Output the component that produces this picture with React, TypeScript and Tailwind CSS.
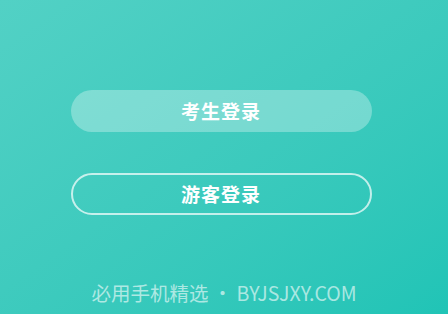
export default function App() {
  return (
    <div
      className="flex h-[314px] w-[448px] flex-col items-center bg-gradient-to-br from-[#52d1c5] to-[#20c4b6] pt-[90px]"
      style={{ fontFamily: '"Noto Sans CJK SC", "Noto Sans", sans-serif' }}
    >
      <button className="mr-[6px] flex h-[42px] w-[301px] items-center justify-center rounded-full bg-white/30 text-[19px] font-bold tracking-[1px] text-white">
        考生登录
      </button>
      <button className="mr-[6px] mt-[41px] flex h-[42px] w-[301px] items-center justify-center rounded-full border-2 border-white/70 text-[19px] font-bold tracking-[1px] text-white">
        游客登录
      </button>
      <div className="mt-auto pb-[9px] text-[19.5px] leading-[24px] text-white/60">
        必用手机精选 • BYJSJXY.COM
      </div>
    </div>
  );
}
